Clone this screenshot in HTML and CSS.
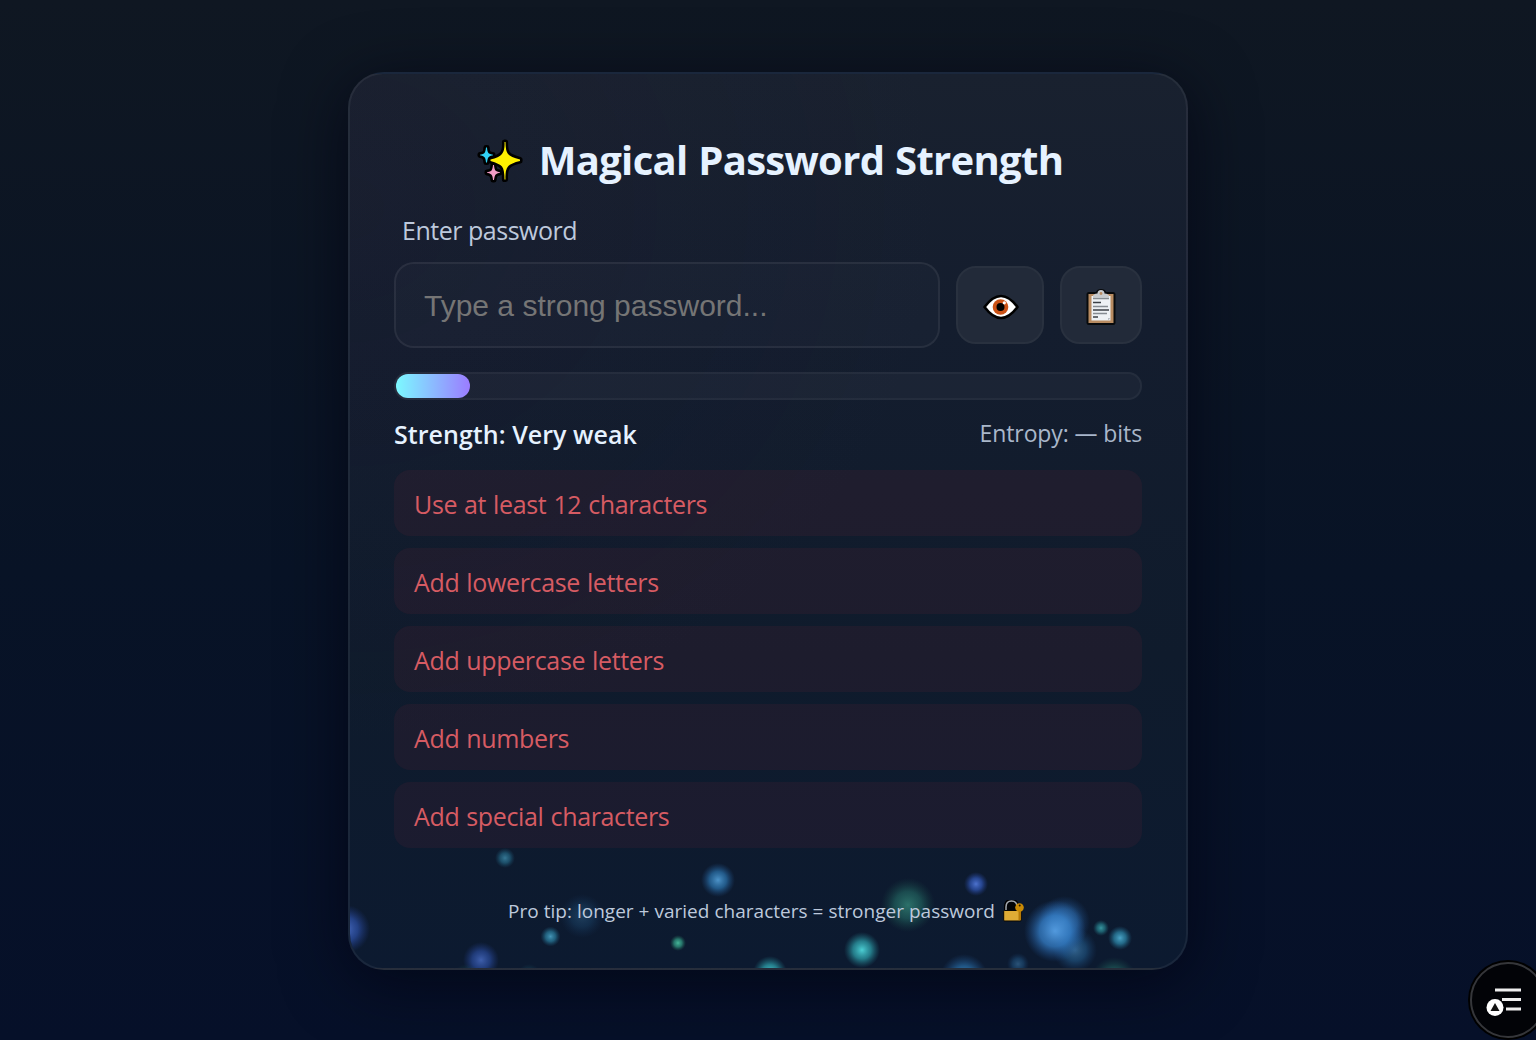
FILE: index.html
```html
<!DOCTYPE html>
<html lang="en">
<head>
<meta charset="utf-8">
<title>Magical Password Strength</title>
<link rel="stylesheet" href="styles.css">
</head>
<body>
<main class="card">
  <svg class="particles" viewBox="350 74 836 894" aria-hidden="true">
    <defs>
      <radialGradient id="teal"><stop offset="0" stop-color="#4fd8dc"/><stop offset=".5" stop-color="#2c9ba6" stop-opacity=".8"/><stop offset="1" stop-color="#207080" stop-opacity="0"/></radialGradient>
      <radialGradient id="sky"><stop offset="0" stop-color="#58a9e4"/><stop offset=".5" stop-color="#2c78b4" stop-opacity=".8"/><stop offset="1" stop-color="#20508a" stop-opacity="0"/></radialGradient>
      <radialGradient id="cyan"><stop offset="0" stop-color="#52b4d8"/><stop offset=".5" stop-color="#2c86a8" stop-opacity=".8"/><stop offset="1" stop-color="#206080" stop-opacity="0"/></radialGradient>
      <radialGradient id="blue"><stop offset="0" stop-color="#547ce0"/><stop offset=".5" stop-color="#3056b4" stop-opacity=".8"/><stop offset="1" stop-color="#243f90" stop-opacity="0"/></radialGradient>
      <radialGradient id="green"><stop offset="0" stop-color="#4cc8a4"/><stop offset=".5" stop-color="#309680" stop-opacity=".8"/><stop offset="1" stop-color="#206050" stop-opacity="0"/></radialGradient>
      <radialGradient id="azure"><stop offset="0" stop-color="#5ba7ee"/><stop offset=".5" stop-color="#3784d0" stop-opacity=".85"/><stop offset="1" stop-color="#2058a0" stop-opacity="0"/></radialGradient>
    </defs>
    <circle cx="505" cy="858" r="10" fill="url(#cyan)" opacity=".6"/>
    <circle cx="718" cy="880" r="17" fill="url(#sky)" opacity=".85"/>
    <circle cx="976" cy="884" r="12" fill="url(#blue)" opacity=".9"/>
    <circle cx="908" cy="905" r="27" fill="url(#green)" opacity=".5"/>
    <circle cx="582" cy="916" r="22" fill="url(#sky)" opacity=".25"/>
    <circle cx="346" cy="929" r="24" fill="url(#blue)" opacity=".8"/>
    <circle cx="481" cy="960" r="18" fill="url(#blue)" opacity=".7"/>
    <circle cx="550.500" cy="936.500" r="10" fill="url(#cyan)" opacity=".8"/>
    <circle cx="678" cy="943" r="8" fill="url(#green)" opacity=".9"/>
    <circle cx="862" cy="950" r="18" fill="url(#teal)" opacity=".95"/>
    <circle cx="770" cy="973" r="17" fill="url(#teal)" opacity=".95"/>
    <circle cx="964" cy="978" r="24" fill="url(#sky)" opacity=".8"/>
    <circle cx="1018" cy="964" r="11" fill="url(#sky)" opacity=".4"/>
    <circle cx="1075" cy="950" r="22" fill="url(#sky)" opacity=".5"/>
    <circle cx="1064" cy="922" r="26" fill="url(#azure)" opacity=".55"/>
    <circle cx="1055" cy="931" r="31" fill="url(#azure)" opacity=".85"/>
    <circle cx="1101" cy="928" r="8" fill="url(#teal)" opacity=".65"/>
    <circle cx="1120" cy="938" r="12" fill="url(#cyan)" opacity=".9"/>
    <circle cx="1114" cy="980" r="23" fill="url(#green)" opacity=".5"/>
    <circle cx="466" cy="978" r="14" fill="url(#green)" opacity=".3"/>
    <circle cx="529" cy="976" r="12" fill="url(#teal)" opacity=".25"/>
  </svg>
  <h1 class="title">
    <svg class="sparkles" viewBox="0 0 46 46" aria-hidden="true">
      <defs>
        <path id="big-star" d="M27.500 4h1q0 9 2.500 12t12 5.500v1.500q-9 2-12 5.500t-2.500 13h-1q0-10-2.500-13t-11.500-5.500v-1.500q8.500-2 11.500-5.500t2.500-12z"/>
        <path id="small-star" d="M-.5-7.500h1q.3 5 2 6t4 1.200v.6q-2.500.3-4 1.500t-2 5.700h-1q-.3-4.500-2-5.700t-4-1.500v-.6q2.500-.3 4-1.200t2-6z"/>
      </defs>
      <g stroke="#000" stroke-width="5.200" stroke-linejoin="round">
        <use href="#big-star"/><use href="#small-star" x="9.500" y="17"/><use href="#small-star" x="16.500" y="34.500"/>
      </g>
      <use href="#big-star" fill="#fff100"/><use href="#small-star" x="9.500" y="17" fill="#31d2f7"/><use href="#small-star" x="16.500" y="34.500" fill="#f29ac4"/>
    </svg>
    <span class="title-text">Magical Password Strength</span>
  </h1>
  <label class="label" for="password">Enter password</label>
  <div class="row">
    <input class="input" id="password" type="text" placeholder="Type a strong password...">
    <button class="button button-eye" type="button" aria-label="Show password">
      <svg width="38" height="28" viewBox="0 0 38 28" aria-hidden="true">
        <path d="M2.500 14q16.500-22 33 0q-16.500 22-33 0z" fill="#fff" stroke="#000" stroke-width="2.600" stroke-linejoin="round"/>
        <circle cx="18.500" cy="14" r="7.800" fill="#cb5216"/><circle cx="18.500" cy="14" r="4"/><circle cx="22.300" cy="9.800" r="1.600" fill="#fff"/>
      </svg>
    </button>
    <button class="button button-copy" type="button" aria-label="Copy password">
      <svg width="32" height="38" viewBox="0 0 32 38" aria-hidden="true">
        <path d="M4 4h7q1-3 5-3t5 3h7q2.500 0 2.500 2.500v28q0 2.500-2.500 2.500H4q-2.500 0-2.500-2.500V6.500Q1.500 4 4 4z" fill="#080a0c"/>
        <rect x="3.500" y="6" width="25" height="29" fill="#b88b61"/><path d="M6.500 8h19v24.500h-19z" fill="#edf1f4"/>
        <path d="M23 32.500v-2.500h2.500z" fill="#b8bec4"/><path d="M8 8q0-2 4.500-2.500q0-3.500 3.500-3.500t3.500 3.500q4.500 .5 4.500 2.500v1.500H8z" fill="#c8cbce"/><circle cx="16" cy="5.500" r="1.400" fill="#b88b61"/>
        <path d="M8 10.500h16M8 18.500h15M8 25.500h14" stroke="#858b91" stroke-width="1.400"/><path d="M8 14.500h8M8 22h16M8 29h5" stroke="#3b4046" stroke-width="1.400"/>
      </svg>
    </button>
  </div>
  <div class="meter"><div class="meter-fill"></div></div>
  <div class="stats"><strong class="strength">Strength: Very weak</strong><span class="entropy">Entropy: — bits</span></div>
  <ul class="rules">
    <li class="rule">Use at least 12 characters</li>
    <li class="rule">Add lowercase letters</li>
    <li class="rule">Add uppercase letters</li>
    <li class="rule">Add numbers</li>
    <li class="rule">Add special characters</li>
  </ul>
  <p class="tip"><span class="tip-text">Pro tip: longer + varied characters = stronger password</span>
    <svg width="22" height="22" viewBox="0 0 22 22" aria-hidden="true">
      <path d="M3 10V7q0-6 5.500-6T14 7v3" fill="#020407" stroke="#000" stroke-width="4"/><path d="M3 10V7q0-6 5.500-6T14 7v3" fill="#020407" stroke="#a4a8ae" stroke-width="1.500"/>
      <rect x=".7" y="10.500" width="17.500" height="10.500" rx="1" fill="#dfac35" stroke="#080704"/><path d="M15.500 10h2.500v10h-2.500z" fill="#b57a08"/><circle cx="16.500" cy="7.500" r="4.300" fill="#c98a05"/><circle cx="16.700" cy="5.500" r="1" fill="#281a03"/>
    </svg>
  </p>
</main>
<button class="fab" type="button" aria-label="Open menu">
  <svg width="72" height="72" viewBox="2 2 72 72" aria-hidden="true">
    <path d="M25 28h26M32 37.500h19M36 47h15" stroke="#eee" stroke-width="3"/>
    <circle cx="25" cy="45.500" r="9.500" fill="#020307"/><circle cx="25" cy="45.500" r="8.500" fill="#fff"/><path d="M25 41l4.500 8h-9z" fill="#111"/>
  </svg>
</button>
</body>
</html>
```
FILE: styles.css
```css
* { box-sizing: border-box; }
body {
  margin: 0; height: 1040px; padding-top: 72px; overflow: hidden;
  display: flex; justify-content: center; align-items: flex-start;
  font-family: "Open Sans", "Noto Sans", sans-serif; color: #e6f2ff;
  background: linear-gradient(180deg, #0f1722 0%, #081326 55%, #061029 100%);
}
.card {
  position: relative; width: 840px; height: 898px; padding: 60px 44px 0;
  border: 2px solid rgba(255,255,255,.06); border-radius: 36px; overflow: hidden;
  background: radial-gradient(ellipse at 0 15%, rgba(42,26,55,.1), transparent 50%), linear-gradient(180deg, #19212f 0%, #141d2e 28%, #0f1b2c 65%, #0c1a30 100%);
  box-shadow: 0 12px 64px rgba(1,3,16,.65);
  display: flex; flex-direction: column;
}
.card > * { position: relative; flex: none; }
.card > .particles { position: absolute; inset: 0; width: 836px; height: 894px; }
.title { display: flex; align-items: center; justify-content: center; gap: 16px; height: 54px; margin: 0; padding-left: 4px; font-size: 40px; line-height: 51px; letter-spacing: -.68px; word-spacing: 1px; white-space: nowrap; }
.title-text { height: 54px; }
.sparkles { width: 46px; height: 46px; }
.label { height: 40px; margin: 26px 8px 0; font-size: 25px; line-height: 33px; letter-spacing: -.48px; color: #bdc9dc; }
.row { display: flex; align-items: center; gap: 16px; height: 86px; margin-top: 8px; }
.input { width: 546px; height: 86px; padding: 2px 28px 0; border: 2px solid rgba(255,255,255,.065); border-radius: 20px; background: rgba(255,255,255,.018); color: #e6f2ff; font: 30px "Liberation Sans", sans-serif; }
.input::placeholder { color: #757575; }
.button { display: grid; place-items: center; height: 78px; padding: 3px 0 0; border: 2px solid #29313f; border-radius: 20px; background: #222a39; }
.button-eye { width: 88px; padding-left: 1px; }
.button-copy { width: 82px; }
.meter { height: 28px; margin-top: 24px; border: 2px solid rgba(255,255,255,.045); border-radius: 14px; background: rgba(255,255,255,.035); }
.meter-fill { width: 74px; height: 24px; border-radius: 12px; background: linear-gradient(90deg, #7cf9ff, #9b7cff); }
.stats { display: flex; justify-content: space-between; height: 34px; margin-top: 18px; }
.strength { font-size: 25px; line-height: 33px; letter-spacing: .05px; font-weight: 600; }
.entropy { font-size: 23px; line-height: 31px; letter-spacing: -.1px; color: #a9b7ca; }
.rules { display: grid; gap: 12px; margin: 18px 0 0; padding: 0; list-style: none; }
.rule { height: 66px; padding: 1px 20px 0; border-radius: 16px; background: rgba(255,50,70,.06); color: #d65b63; font-size: 25px; line-height: 66px; letter-spacing: -.35px; word-spacing: .8px; }
.tip { display: flex; align-items: center; justify-content: center; gap: 8px; height: 28px; margin: 49px 0 0; padding-right: 3px; color: #bdc9dc; font-size: 19px; line-height: 28px; letter-spacing: .02px; white-space: nowrap; }
.fab { position: absolute; left: 1470px; top: 962px; width: 76px; height: 76px; padding: 0; border: 2px solid #35363a; border-radius: 50%; background: #020307; box-shadow: 0 0 0 2px #000; }
.fab svg { display: block; }
```
